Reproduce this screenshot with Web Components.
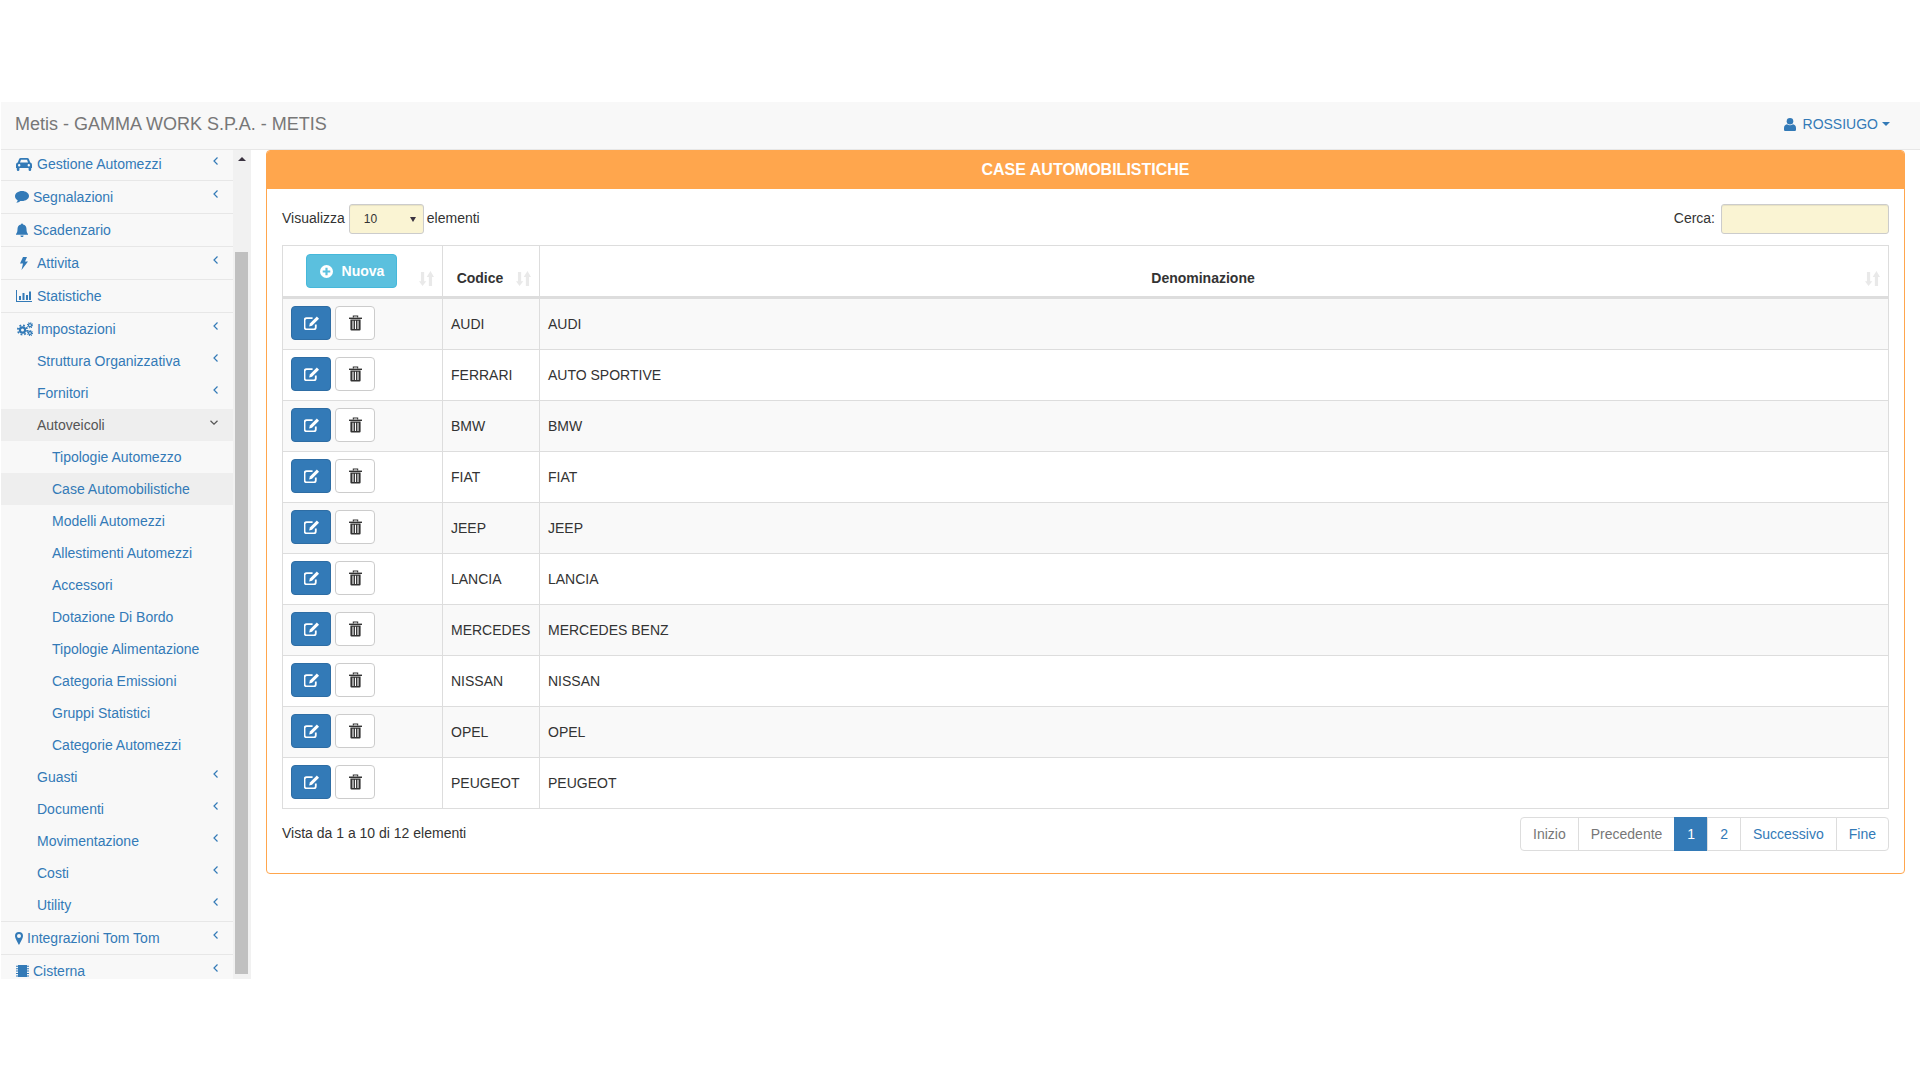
<!DOCTYPE html>
<html lang="it">
<head>
<meta charset="utf-8">
<title>Metis - Case Automobilistiche</title>
<style>
    html, body { margin: 0; background: #fff; }
    body { font: 14px/20px "Liberation Sans", Arial, sans-serif; color: #333; }
</style>
</head>
<body>
<metis-app>
    <top-bar slot="top" brand="Metis - GAMMA WORK S.P.A. - METIS" user="ROSSIUGO"></top-bar>
    <side-menu slot="side">
        <menu-item top first icon="car" label="Gestione Automezzi" arrow="left"></menu-item>
        <menu-item top icon="comment" label="Segnalazioni" arrow="left"></menu-item>
        <menu-item top icon="bell" label="Scadenzario"></menu-item>
        <menu-item top icon="bolt" label="Attivita" arrow="left"></menu-item>
        <menu-item top icon="chart" label="Statistiche"></menu-item>
        <menu-item top icon="cogs" label="Impostazioni" arrow="left">
            <menu-item level="1" label="Struttura Organizzativa" arrow="left"></menu-item>
            <menu-item level="1" label="Fornitori" arrow="left"></menu-item>
            <menu-item level="1" label="Autoveicoli" arrow="down" active dark>
                <menu-item level="2" label="Tipologie Automezzo"></menu-item>
                <menu-item level="2" label="Case Automobilistiche" active></menu-item>
                <menu-item level="2" label="Modelli Automezzi"></menu-item>
                <menu-item level="2" label="Allestimenti Automezzi"></menu-item>
                <menu-item level="2" label="Accessori"></menu-item>
                <menu-item level="2" label="Dotazione Di Bordo"></menu-item>
                <menu-item level="2" label="Tipologie Alimentazione"></menu-item>
                <menu-item level="2" label="Categoria Emissioni"></menu-item>
                <menu-item level="2" label="Gruppi Statistici"></menu-item>
                <menu-item level="2" label="Categorie Automezzi"></menu-item>
            </menu-item>
            <menu-item level="1" label="Guasti" arrow="left"></menu-item>
            <menu-item level="1" label="Documenti" arrow="left"></menu-item>
            <menu-item level="1" label="Movimentazione" arrow="left"></menu-item>
            <menu-item level="1" label="Costi" arrow="left"></menu-item>
            <menu-item level="1" label="Utility" arrow="left"></menu-item>
        </menu-item>
        <menu-item top icon="marker" label="Integrazioni Tom Tom" arrow="left"></menu-item>
        <menu-item top icon="tank" label="Cisterna" arrow="left"></menu-item>
    </side-menu>
    <orange-panel slot="main" heading="CASE AUTOMOBILISTICHE">
        <table-tools></table-tools>
        <cars-table></cars-table>
        <table-foot info="Vista da 1 a 10 di 12 elementi"></table-foot>
    </orange-panel>
</metis-app>

<script>
// icons are redrawn by hand: [viewBox w, viewBox h, markup, drawn w, drawn h]
const ICONS = {
    car: [16, 13, '<path fill-rule="evenodd" d="M3 1.200C3.300.4 3.900 0 4.800 0h6.400c.9 0 1.500.4 1.800 1.200L14.200 4.600c1.100.3 1.800 1.200 1.800 2.300V10h-.8v1.700a1.300 1.300 0 0 1-2.600 0V10H3.400v1.700a1.300 1.300 0 0 1-2.600 0V10H0V6.900c0-1.100.7-2 1.800-2.300zM4 4.600h8l-.8-2.400c-.1-.3-.2-.4-.5-.4H5.300c-.3 0-.4.1-.5.4zM3.200 6a1.200 1.200 0 1 0 0 2.400 1.200 1.200 0 0 0 0-2.400zm9.600 0a1.200 1.200 0 1 0 0 2.400 1.200 1.200 0 0 0 0-2.400z"/>'],
    comment: [14, 12, '<path d="M7 0C3.100 0 0 2.300 0 5.200c0 1.700 1 3.100 2.700 4.100-.2.8-.6 1.700-1.400 2.400 1.600-.1 3-.8 4-1.800.5.1 1.100.1 1.700.1 3.900 0 7-2.200 7-5C14 2.300 10.900 0 7 0z"/>'],
    bell: [12, 13, '<path d="M6 0a1 1 0 0 1 1 1c2.300.4 3.500 2.200 3.500 4.500 0 3 .7 4 1.500 5v.8H0v-.8c.8-1 1.500-2 1.500-5C1.500 3.200 2.700 1.400 5 1a1 1 0 0 1 1-1zM4.400 12h3.200a1.600 1.600 0 0 1-3.200 0z"/>', 12, 14],
    bolt: [8, 13, '<path d="M3 0h4L5 4.500h3L1.500 13 3 6.500H0z"/>'],
    chart: [16, 12, '<path d="M0 0h1v11h15v1H0zM3 6h2v4H3zM6.500 3h2v7h-2zM10 5h2v5h-2zM13 1.500h2V10h-2z"/>'],
    cogs: [16, 14, '<g fill="none" stroke="currentColor"><circle cx="5.500" cy="8" r="2.600" stroke-width="2.200"/><circle cx="5.500" cy="8" r="4.700" stroke-width="1.800" stroke-dasharray="1.800 1.890"/><circle cx="13" cy="3.200" r="1.500" stroke-width="1.300"/><circle cx="13" cy="3.200" r="2.500" stroke-width="1.100" stroke-dasharray="1 .96"/><circle cx="13" cy="11" r="1.500" stroke-width="1.300"/><circle cx="13" cy="11" r="2.500" stroke-width="1.100" stroke-dasharray="1 .96"/></g>'],
    marker: [8, 13, '<path fill-rule="evenodd" d="M4 0a4 4 0 0 1 4 4c0 2-2.500 6.500-4 9C2.500 10.500 0 6 0 4a4 4 0 0 1 4-4zm0 2a2 2 0 1 0 0 4 2 2 0 0 0 0-4z"/>'],
    tank: [13, 12, '<path d="M2 0h9v12H2zM0 .8h2v1H0zM0 3.200h2v1H0zM0 5.600h2v1H0zM0 8h2v1H0zM0 10.400h2v1H0zM11 .8h2v1h-2zM11 3.200h2v1h-2zM11 5.600h2v1h-2zM11 8h2v1h-2zM11 10.400h2v1h-2z"/>'],
    user: [12, 13, '<circle cx="6" cy="3.300" r="3.300"/><path d="M0 11.500V10c0-2 1.200-3.500 3-3.700.8.6 1.900 1 3 1s2.200-.4 3-1c1.800.2 3 1.700 3 3.700v1.500c0 1-.6 1.500-1.500 1.500h-9C.6 13 0 12.500 0 11.500z"/>'],
    edit: [14, 13, '<path fill="none" stroke="currentColor" stroke-width="1.700" d="M11 8v2.500a2 2 0 0 1-2 2H2.500a2 2 0 0 1-2-2V4a2 2 0 0 1 2-2H8"/><path d="M12 .5l2 2-6.500 6.500-2.700.7.7-2.700z"/>', 15, 14],
    trash: [12, 14, '<path fill="none" stroke="currentColor" d="M4 2V.6h4V2"/><path d="M0 2h12v1.300H0z"/><path fill-rule="evenodd" d="M1.300 3.800h9.400V13a1 1 0 0 1-1 1H2.300a1 1 0 0 1-1-1zM3.200 5v7.500h1V5zm2.300 0v7.500h1V5zm2.300 0v7.500h1V5z"/>', 13, 16],
    plus: [12, 12, '<path fill-rule="evenodd" d="M6 0a6 6 0 1 0 0 12A6 6 0 0 0 6 0zM5 2.500h2V5h2.500v2H7v2.500H5V7H2.500V5H5z"/>', 13, 13],
    sort: [14, 14, '<path d="M1.800 1h3v8.500h2L3.300 14 0 9.500h1.800zM9.200 14h3V5.500H14L10.700 0 7.200 5.500h2z"/>', 15, 15],
    left: [5, 8, '<path fill="none" stroke="currentColor" stroke-width="1.200" d="M4.500.5L1 4l3.500 3.500"/>'],
    down: [8, 5, '<path fill="none" stroke="currentColor" stroke-width="1.200" d="M.5.8L4 4.200 7.500.8"/>']
};

class FaIcon extends HTMLElement {
    connectedCallback() {
        const [w, h, body, dw, dh] = ICONS[this.getAttribute('name')];
        this.attachShadow({ mode: 'open' });
        this.shadowRoot.innerHTML = `
            <style>
                :host { display: inline-flex; flex: none; }
                svg { display: block; fill: currentColor; }
            </style>
            <svg width="${dw || w}" height="${dh || h}" viewBox="0 0 ${w} ${h}">${body}</svg>`;
    }
}
customElements.define('fa-icon', FaIcon);

class MetisApp extends HTMLElement {
    connectedCallback() {
        this.attachShadow({ mode: 'open' });
        this.shadowRoot.innerHTML = `
            <style>
                :host { display: block; padding: 102px 0 0 1px; height: 978px; }
                .wrap { display: flex; align-items: flex-start; }
                .side { flex: none; width: 250px; }
                .main { flex: 1; min-width: 0; padding: 0 15px; }
            </style>
            <slot name="top"></slot>
            <div class="wrap">
                <div class="side"><slot name="side"></slot></div>
                <div class="main"><slot name="main"></slot></div>
            </div>`;
    }
}
customElements.define('metis-app', MetisApp);

class TopBar extends HTMLElement {
    connectedCallback() {
        this.attachShadow({ mode: 'open' });
        this.shadowRoot.innerHTML = `
            <style>
                :host { display: block; }
                nav {
                    display: flex;
                    align-items: center;
                    justify-content: space-between;
                    height: 47px;
                    padding: 0 30px 0 14px;
                    background: #f8f8f8;
                    border-bottom: 1px solid #e7e7e7;
                }
                .brand { font-size: 18px; color: #777; margin-bottom: 3px; }
                .user { display: flex; align-items: center; color: #337ab7; margin-bottom: 3px; }
                .user span { margin-left: 7px; }
                .caret {
                    margin-left: 4px;
                    border-top: 4px solid #337ab7;
                    border-left: 4px solid transparent;
                    border-right: 4px solid transparent;
                }
            </style>
            <nav>
                <div class="brand">${this.getAttribute('brand')}</div>
                <div class="user"><fa-icon name="user"></fa-icon><span>${this.getAttribute('user')}</span><i class="caret"></i></div>
            </nav>`;
    }
}
customElements.define('top-bar', TopBar);

class SideMenu extends HTMLElement {
    connectedCallback() {
        this.attachShadow({ mode: 'open' });
        this.shadowRoot.innerHTML = `
            <style>
                :host { display: flex; height: 829px; overflow: hidden; }
                .list { flex: none; width: 232px; height: 829px; overflow: hidden; background: #f8f8f8; }
                .rail {
                    flex: none;
                    width: 18px;
                    box-sizing: border-box;
                    padding: 0 3px 5px 2px;
                    display: flex;
                    flex-direction: column;
                    background: #f1f1f1;
                }
                .track { height: 102px; display: flex; justify-content: center; padding-top: 7px; box-sizing: border-box; }
                .up {
                    width: 0; height: 0;
                    border-bottom: 4px solid #3a3340;
                    border-left: 4px solid transparent;
                    border-right: 4px solid transparent;
                }
                .thumb { flex: 1; background: #c0c0c0; }
            </style>
            <div class="list"><slot></slot></div>
            <div class="rail">
                <div class="track"><div class="up"></div></div>
                <div class="thumb"></div>
            </div>`;
    }
}
customElements.define('side-menu', SideMenu);

// box width and inner offset of the icon, so the labels start where they do in the app
const ICON_BOX = {
    car: [22, 1], comment: [18, 0], bell: [18, 1], bolt: [22, 5],
    chart: [22, 1], cogs: [22, 2], marker: [12, 0], tank: [18, 1]
};

class MenuItem extends HTMLElement {
    connectedCallback() {
        const level = +(this.getAttribute('level') || 0);
        const icon = this.getAttribute('icon');
        const arrow = this.getAttribute('arrow');
        const pad = [14, 36, 51][level];
        const box = icon ? ICON_BOX[icon] : null;
        this.attachShadow({ mode: 'open' });
        this.shadowRoot.innerHTML = `
            <style>
                :host { display: block; }
                :host([top]) { border-bottom: 1px solid #e7e7e7; }
                .row {
                    display: flex;
                    align-items: center;
                    height: 32px;
                    box-sizing: border-box;
                    padding: 0 15px 0 ${pad}px;
                    color: #337ab7;
                }
                :host([first]) .row { height: 30px; padding-bottom: 2px; }
                :host([active]) > .row { background: #eee; }
                :host([dark]) > .row { color: #555; }
                .ico { width: ${box ? box[0] : 0}px; padding-left: ${box ? box[1] : 0}px; box-sizing: border-box; display: flex; }
                .label { flex: 1; }
                .arrow { display: flex; margin-bottom: ${arrow === 'down' ? 5 : 7}px; }
            </style>
            <div class="row">
                <div class="ico">${icon ? `<fa-icon name="${icon}"></fa-icon>` : ''}</div>
                <div class="label">${this.getAttribute('label')}</div>
                ${arrow ? `<div class="arrow"><fa-icon name="${arrow}"></fa-icon></div>` : ''}
            </div>
            <slot></slot>`;
    }
}
customElements.define('menu-item', MenuItem);

class OrangePanel extends HTMLElement {
    connectedCallback() {
        this.attachShadow({ mode: 'open' });
        this.shadowRoot.innerHTML = `
            <style>
                :host {
                    display: block;
                    background: #fff;
                    border: 1px solid #ffa64d;
                    border-radius: 4px;
                    overflow: hidden;
                }
                h3 {
                    margin: 0;
                    padding: 9px 15px;
                    background: #ffa64d;
                    color: #fff;
                    font-size: 16px;
                    line-height: 20px;
                    font-weight: bold;
                    text-align: center;
                }
                .body { padding: 15px 15px 22px; }
            </style>
            <h3>${this.getAttribute('heading')}</h3>
            <div class="body"><slot></slot></div>`;
    }
}
customElements.define('orange-panel', OrangePanel);

class TableTools extends HTMLElement {
    connectedCallback() {
        this.attachShadow({ mode: 'open' });
        this.shadowRoot.innerHTML = `
            <style>
                :host {
                    display: flex;
                    justify-content: space-between;
                    align-items: center;
                    height: 30px;
                    margin-bottom: 11px;
                }
                .group { display: flex; align-items: center; }
                .group > span { margin-bottom: 2px; }
                .select, input {
                    box-sizing: border-box;
                    height: 30px;
                    background: #faf4d3;
                    border: 1px solid #ccc;
                    border-radius: 3px;
                    box-shadow: inset 0 1px 1px rgba(0,0,0,.075);
                }
                .select {
                    width: 75px;
                    margin: 0 3px 0 4px;
                    padding: 0 7px 0 14px;
                    display: flex;
                    align-items: center;
                    justify-content: space-between;
                    font-size: 12px;
                }
                .select i {
                    border-top: 5px solid #3a3340;
                    border-left: 3px solid transparent;
                    border-right: 3px solid transparent;
                }
                input { width: 168px; margin-left: 6px; }
            </style>
            <div class="group"><span>Visualizza</span><div class="select"><b style="font-weight:normal">10</b><i></i></div><span>elementi</span></div>
            <div class="group"><span>Cerca:</span><input type="text" aria-label="Cerca"></div>`;
    }
}
customElements.define('table-tools', TableTools);

const CARS = [
    ['AUDI', 'AUDI'], ['FERRARI', 'AUTO SPORTIVE'], ['BMW', 'BMW'], ['FIAT', 'FIAT'], ['JEEP', 'JEEP'],
    ['LANCIA', 'LANCIA'], ['MERCEDES', 'MERCEDES BENZ'], ['NISSAN', 'NISSAN'], ['OPEL', 'OPEL'], ['PEUGEOT', 'PEUGEOT']
];

class CarsTable extends HTMLElement {
    connectedCallback() {
        const rows = CARS.map(([code, name]) => `
            <tr>
                <td class="acts">
                    <span class="btn edit"><fa-icon name="edit"></fa-icon></span>
                    <span class="btn del"><fa-icon name="trash"></fa-icon></span>
                </td>
                <td>${code}</td>
                <td>${name}</td>
            </tr>`).join('');
        this.attachShadow({ mode: 'open' });
        this.shadowRoot.innerHTML = `
            <style>
                :host { display: block; }
                table { width: 100%; border-collapse: collapse; table-layout: fixed; }
                th, td { border: 1px solid #ddd; }
                th {
                    position: relative;
                    padding: 8px 30px 8px 8px;
                    vertical-align: bottom;
                    text-align: center;
                    border-bottom-width: 3px;
                    color: #333;
                }
                .sort { position: absolute; right: 8px; bottom: 10px; color: #e9e9e9; }
                td { height: 50px; box-sizing: border-box; padding: 8px; vertical-align: middle; }
                tbody tr:nth-child(odd) { background: #f9f9f9; }
                td.acts { padding: 7px 8px; white-space: nowrap; font-size: 0; }
                .acts .btn { margin-bottom: 2px; }
                .btn {
                    display: inline-flex;
                    align-items: center;
                    justify-content: center;
                    box-sizing: border-box;
                    height: 34px;
                    border: 1px solid #ccc;
                    border-radius: 4px;
                    vertical-align: middle;
                }
                .edit { width: 40px; margin-right: 4px; background: #337ab7; border-color: #2e6da4; color: #fff; }
                .del { width: 40px; background: #fff; color: #333; }
                .new {
                    width: 91px;
                    margin: 0 auto;
                    padding-left: 1px;
                    gap: 9px;
                    background: #5bc0de;
                    border-color: #46b8da;
                    color: #fff;
                    display: flex;
                    font-size: 14px;
                }
            </style>
            <table>
                <colgroup><col style="width:160px"><col style="width:97px"><col></colgroup>
                <thead>
                    <tr>
                        <th><span class="btn new"><fa-icon name="plus"></fa-icon>Nuova</span><fa-icon class="sort" name="sort"></fa-icon></th>
                        <th>Codice<fa-icon class="sort" name="sort"></fa-icon></th>
                        <th>Denominazione<fa-icon class="sort" name="sort"></fa-icon></th>
                    </tr>
                </thead>
                <tbody>${rows}</tbody>
            </table>`;
    }
}
customElements.define('cars-table', CarsTable);

class TableFoot extends HTMLElement {
    connectedCallback() {
        const pages = [
            ['Inizio', 'off'], ['Precedente', 'off'], ['1', 'cur'], ['2', ''], ['Successivo', ''], ['Fine', '']
        ].map(([t, c]) => `<li class="${c}">${t}</li>`).join('');
        this.attachShadow({ mode: 'open' });
        this.shadowRoot.innerHTML = `
            <style>
                :host { display: flex; justify-content: space-between; align-items: flex-start; margin-top: 8px; }
                .info { padding-top: 6px; }
                ul { display: flex; margin: 0; padding: 0; list-style: none; }
                li {
                    padding: 6px 12px;
                    margin-left: -1px;
                    border: 1px solid #ddd;
                    color: #337ab7;
                    background: #fff;
                }
                li:first-child { margin-left: 0; border-radius: 4px 0 0 4px; }
                li:last-child { border-radius: 0 4px 4px 0; }
                .off { color: #777; }
                .cur { background: #337ab7; border-color: #337ab7; color: #fff; }
            </style>
            <div class="info">${this.getAttribute('info')}</div>
            <ul>${pages}</ul>`;
    }
}
customElements.define('table-foot', TableFoot);
</script>
</body>
</html>
